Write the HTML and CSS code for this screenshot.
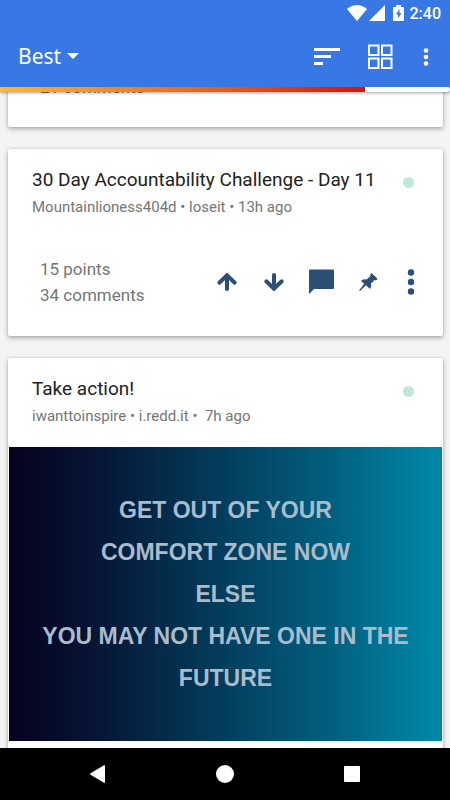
FILE: index.html
```
<!DOCTYPE html>
<html lang="en">
<head>
  <meta charset="UTF-8">
  <meta name="viewport" content="width=device-width, initial-scale=1">
  <title>Best</title>
  <link rel="stylesheet" href="styles.css">
</head>
<body>
  <div class="screen">
    <header class="app-bar">
      <div class="status-bar">
        <svg width="20" height="16" viewBox="0 0 20 16"><path d="M0 4Q10-4 20 4L10 16z"/></svg>
        <svg class="signal" width="16" height="16" viewBox="0 0 16 16"><path d="M16 0v16H0z"/></svg>
        <svg class="battery" width="11" height="16" viewBox="0 0 11 16"><path fill-rule="evenodd" d="M3 0h5v2h2q1 0 1 1v12q0 1-1 1H1q-1 0-1-1V3q0-1 1-1h2zM6.500 4L3 9.500h2V13.500L8.500 8h-2z"/></svg>
        <span class="time">2:40</span>
      </div>
      <div class="toolbar">
        <label class="sort-select">
          <select aria-label="Sort">
            <option>Best</option>
          </select>
          <svg width="12" height="6" viewBox="0 0 12 6"><path d="M0 0h12L6 6z"/></svg>
        </label>
        <button type="button" aria-label="Sort order">
          <svg width="28" height="26" viewBox="0 0 28 26"><path d="M0 5h26v3H0zM0 12h17v3H0zM0 19h9v3H0z"/></svg>
        </button>
        <button type="button" aria-label="Layout">
          <svg width="26" height="26" viewBox="0 0 26 26"><path class="line" d="M1 2.500h9.500v9.500H1zM14 2.500h9.500v9.500H14zM1 15.500h9.500v9.500H1zM14 15.500h9.500v9.500H14z"/></svg>
        </button>
        <button type="button" aria-label="More">
          <svg width="12" height="26" viewBox="0 0 12 26"><circle cx="6" cy="7.500" r="2.300"/><circle cx="6" cy="14" r="2.300"/><circle cx="6" cy="20.500" r="2.300"/></svg>
        </button>
      </div>
      <div class="progress"><div class="progress-value" style="width: 81%"></div></div>
    </header>

    <main class="feed">
      <article class="card">
        <div class="stats stats-only">
          <div>21 comments</div>
        </div>
      </article>

      <article class="card">
        <div class="card-header">
          <div>
            <h2>30 Day Accountability Challenge - Day 11</h2>
            <p>Mountainlioness404d • loseit • 13h ago</p>
          </div>
          <span class="dot"></span>
        </div>
        <div class="card-footer">
          <div class="stats">
            <div>15 points</div>
            <div>34 comments</div>
          </div>
          <div class="actions">
            <button type="button" aria-label="Upvote">
              <svg width="28" height="28" viewBox="0 0 28 28"><path class="arrow" d="M14 21V8M6.300 14.700L14 7.300l7.700 7.400"/></svg>
            </button>
            <button type="button" aria-label="Downvote">
              <svg width="28" height="28" viewBox="0 0 28 28"><path class="arrow" d="M14 7v13M6.300 13.300L14 20.700l7.700-7.400"/></svg>
            </button>
            <button type="button" aria-label="Comments">
              <svg width="28" height="28" viewBox="0 0 28 28"><path d="M3 1.500h23q1 0 1 1V20q0 1-1 1H7l-5 5V2.500q0-1 1-1z"/></svg>
            </button>
            <button type="button" aria-label="Pin">
              <svg width="28" height="28" viewBox="0 0 28 28"><path d="M17.500 5l6 5.800q-.5 1.900-3 1.200l-3.500 3.500q1 3-1 5.500l-4-3.800L6 23l-1-.5 5.200-6.700L7 13q2-2.500 5.500-1.500L16.500 8q-1-2 1-3z"/></svg>
            </button>
            <button type="button" aria-label="More">
              <svg width="20" height="28" viewBox="0 0 20 28"><circle cx="10" cy="4.500" r="3.200"/><circle cx="10" cy="14" r="3.200"/><circle cx="10" cy="23.500" r="3.200"/></svg>
            </button>
          </div>
        </div>
      </article>

      <article class="card">
        <div class="card-header">
          <div>
            <h2>Take action!</h2>
            <p>iwanttoinspire • i.redd.it •&nbsp; 7h ago</p>
          </div>
          <span class="dot"></span>
        </div>
        <div class="poster">
          GET OUT OF YOUR<br>
          COMFORT ZONE NOW<br>
          ELSE<br>
          YOU MAY NOT HAVE ONE IN THE<br>
          FUTURE
        </div>
      </article>
    </main>

    <nav class="nav-bar">
      <button type="button" aria-label="Back">
        <svg width="18" height="18" viewBox="0 0 18 18"><path d="M1.500 8.200L15 .3q1-.5 1 .5v16.400q0 1-1 .5L1.500 9.800q-1-.8 0-1.600z"/></svg>
      </button>
      <button type="button" aria-label="Home">
        <svg width="18" height="18" viewBox="0 0 18 18"><circle cx="9" cy="9" r="9"/></svg>
      </button>
      <button type="button" aria-label="Recent apps">
        <svg width="18" height="18" viewBox="0 0 18 18"><rect x="1" y="1" width="16" height="16" rx="1"/></svg>
      </button>
    </nav>
  </div>
</body>
</html>
```
FILE: styles.css
```
body {
  margin: 0;
  font-family: Roboto, "Liberation Sans", sans-serif;
  background: #f4f4f4;
}
button {
  display: flex;
  padding: 0;
  border: none;
  background: none;
  cursor: pointer;
}
svg {
  display: block;
  fill: currentColor;
}
.screen {
  display: flex;
  flex-direction: column;
  height: 100vh;
  overflow: hidden;
}

/* top bar */
.app-bar {
  position: relative;
  z-index: 1;
  color: #fff;
  background: #3878e4;
  box-shadow: 0 1px 3px rgba(0, 0, 0, 0.35);
}
.status-bar {
  display: flex;
  justify-content: flex-end;
  align-items: center;
  height: 26px;
  padding-right: 9px;
}
.signal {
  margin: 0 8px 0 2px;
}
.battery {
  margin-right: 6px;
}
.time {
  font-size: 16px;
  font-weight: 500;
}
.toolbar {
  display: flex;
  align-items: center;
  gap: 26px;
  height: 60px;
  padding: 0 18px 1px;
  box-sizing: content-box;
}
.toolbar button {
  color: #fff;
}
.line {
  fill: none;
  stroke: currentColor;
  stroke-width: 2;
}
.sort-select {
  display: flex;
  align-items: center;
  gap: 5px;
  margin-right: auto;
}
.sort-select select {
  appearance: none;
  padding: 0;
  border: none;
  background: none;
  color: #fff;
  font-family: "Noto Sans", "Open Sans", sans-serif;
  font-size: 21px;
}
.progress {
  height: 5px;
  border-radius: 2px;
  background: #fff;
  overflow: hidden;
}
.progress-value {
  height: 100%;
  background: linear-gradient(to right, #ffb72e, #e85c12 62%, #d41508);
}

/* posts */
.feed {
  flex: 1;
  min-height: 0;
  overflow: hidden;
  padding: 0 7px 0 8px;
}
.card {
  margin-bottom: 22px;
  border-radius: 2px;
  background: #fff;
  box-shadow: 0 2px 5px rgba(0, 0, 0, 0.3), 0 0 2px rgba(0, 0, 0, 0.15);
}
.card:first-child {
  margin-top: -18px;
}
.card:last-child {
  padding-bottom: 24px;
}
.card-header {
  display: flex;
  justify-content: space-between;
  padding: 16px 29px 0 24px;
}
.card-header h2 {
  margin: 0;
  font-size: 19px;
  font-weight: 400;
  line-height: 30px;
  color: #212121;
}
.card-header p {
  margin: 0;
  font-size: 15px;
  line-height: 24px;
  color: #757575;
}
.dot {
  width: 11px;
  height: 11px;
  margin-top: 12px;
  border-radius: 50%;
  background: #c0e6de;
}
.card-footer {
  display: flex;
  justify-content: space-between;
  align-items: center;
  padding: 37px 22px 28px 32px;
}
.stats {
  font-size: 17px;
  line-height: 26px;
  color: #757575;
}
.stats-only {
  padding: 0 32px 27px;
}
.actions {
  display: flex;
  gap: 19px;
}
.actions button {
  color: #2c5075;
}
.arrow {
  fill: none;
  stroke: currentColor;
  stroke-width: 4;
  stroke-linecap: round;
}
.poster {
  display: flex;
  flex-direction: column;
  justify-content: center;
  aspect-ratio: 433 / 294;
  margin: 19px 1px 0;
  font: bold 23px/42px "Liberation Sans", Arial, sans-serif;
  text-align: center;
  color: #a9bccd;
  background: linear-gradient(to right, #07001f, #061838 22%, #043a59 47%, #02607f 75%, #0086a6 98%);
}

/* system buttons */
.nav-bar {
  position: relative;
  z-index: 1;
  display: flex;
  justify-content: center;
  align-items: center;
  gap: 109px;
  height: 52px;
  background: #000;
}
.nav-bar button {
  color: #fff;
}
```
